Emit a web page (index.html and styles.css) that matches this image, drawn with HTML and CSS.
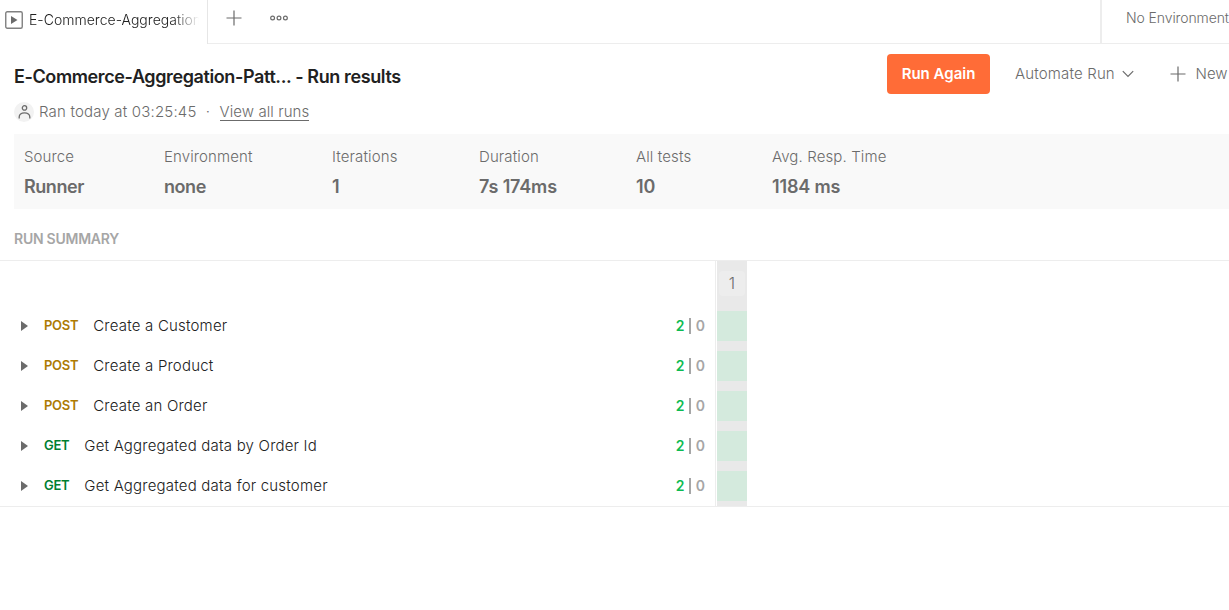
FILE: index.html
```
<!DOCTYPE html>
<html lang="en">
<head>
<meta charset="utf-8">
<title>Run results</title>
<link rel="stylesheet" href="styles.css">
</head>
<body>
<nav class="tabbar">
  <div class="tab">
    <svg class="tab-icon" width="18" height="18" viewBox="0 0 18 18"><rect x=".75" y=".75" width="16.5" height="16.5" rx="1.5" fill="none" stroke="#808080" stroke-width="1.4"/><path d="M6 5l6.5 4L6 13z" fill="#6b6b6b"/></svg>
    <span class="tab-name">E-Commerce-Aggregation</span>
  </div>
  <div class="tab-actions">
    <svg class="plus" width="16" height="16" viewBox="0 0 16 16"><path d="M8 .5v15M.5 8h15" stroke="#6b6b6b" stroke-width="1.2"/></svg>
    <svg class="dots" width="18" height="6" viewBox="0 0 18 6" fill="none" stroke="#6b6b6b" stroke-width="1.2"><circle cx="2.6" cy="3" r="1.9"/><circle cx="9" cy="3" r="1.9"/><circle cx="15.4" cy="3" r="1.9"/></svg>
  </div>
  <div class="environment">No Environment</div>
</nav>
<header class="header">
  <div class="heading">
    <h1 class="title">E-Commerce-Aggregation-Patt... - Run results</h1>
    <div class="meta">
      <span class="avatar"><svg width="14" height="14" viewBox="0 0 14 14" fill="none" stroke="#6b6b6b" stroke-width="1.3"><circle cx="7.5" cy="2.9" r="2.2"/><path d="M2.2 13.5V12c0-2.6 2-4.2 5.3-4.2s5.3 1.6 5.3 4.2v1.5"/></svg></span>
      <span class="ran">Ran today at 03:25:45</span>
      <span class="separator">·</span>
      <a class="all-runs">View all runs</a>
    </div>
  </div>
  <div class="actions">
    <button class="run-again">Run Again</button>
    <span class="automate">Automate Run</span>
    <svg class="chevron" width="12" height="8" viewBox="0 0 12 8"><path d="M.8 1.2L6 6.4l5.2-5.2" fill="none" stroke="#6b6b6b" stroke-width="1.2"/></svg>
    <svg class="new-icon" width="16" height="16" viewBox="0 0 16 16"><path d="M8 .5v15M.5 8h15" stroke="#6b6b6b" stroke-width="1.2"/></svg>
    <span class="new">New</span>
  </div>
</header>
<section class="stats">
  <div><div class="label">Source</div><div class="value">Runner</div></div>
  <div><div class="label">Environment</div><div class="value">none</div></div>
  <div><div class="label">Iterations</div><div class="value">1</div></div>
  <div><div class="label">Duration</div><div class="value numeric">7s 174ms</div></div>
  <div><div class="label">All tests</div><div class="value numeric">10</div></div>
  <div><div class="label">Avg. Resp. Time</div><div class="value numeric">1184 ms</div></div>
</section>
<h2 class="summary-title">RUN SUMMARY</h2>
<section class="summary">
  <div class="requests">
    <div class="request"><svg class="caret" width="7" height="10" viewBox="0 0 7 10"><path d="M0 0l7 5-7 5z"/></svg><span class="method post">POST</span><span class="name">Create a Customer</span><span class="pass">2</span><i class="bar"></i><span class="fail">0</span></div>
    <div class="request"><svg class="caret" width="7" height="10" viewBox="0 0 7 10"><path d="M0 0l7 5-7 5z"/></svg><span class="method post">POST</span><span class="name">Create a Product</span><span class="pass">2</span><i class="bar"></i><span class="fail">0</span></div>
    <div class="request"><svg class="caret" width="7" height="10" viewBox="0 0 7 10"><path d="M0 0l7 5-7 5z"/></svg><span class="method post">POST</span><span class="name">Create an Order</span><span class="pass">2</span><i class="bar"></i><span class="fail">0</span></div>
    <div class="request"><svg class="caret" width="7" height="10" viewBox="0 0 7 10"><path d="M0 0l7 5-7 5z"/></svg><span class="method get">GET</span><span class="name">Get Aggregated data by Order Id</span><span class="pass">2</span><i class="bar"></i><span class="fail">0</span></div>
    <div class="request"><svg class="caret" width="7" height="10" viewBox="0 0 7 10"><path d="M0 0l7 5-7 5z"/></svg><span class="method get">GET</span><span class="name">Get Aggregated data for customer</span><span class="pass">2</span><i class="bar"></i><span class="fail">0</span></div>
  </div>
  <div class="iteration">
    <div class="iteration-head"><span class="iteration-number">1</span></div>
    <div class="cell"></div><div class="cell"></div><div class="cell"></div><div class="cell"></div><div class="cell"></div>
  </div>
</section>
</body>
</html>
```

FILE: styles.css
```
* { box-sizing: border-box; }
body { margin: 0; height: 610px; overflow: hidden; background: #fff; color: #212121; font: 350 15px/20px Inter, "Liberation Sans", sans-serif; letter-spacing: .12px; white-space: nowrap; }
svg { display: block; flex: none; }
.tabbar { display: flex; height: 44px; }
.tab { width: 208px; flex: none; display: flex; padding: 10px 0 0 5px; border-right: 1px solid #e6e6e6; }
.tab-icon { margin-top: 1px; }
.tab-name { width: 172px; margin-left: 6px; overflow: hidden; font-size: 14px; letter-spacing: .02px; -webkit-mask-image: linear-gradient(to right, #000 145px, transparent 170px); mask-image: linear-gradient(to right, #000 145px, transparent 170px); }
.tab-actions { width: 892px; flex: none; display: flex; padding: 10px 0 0 18px; border-bottom: 1px solid #ededed; }
.dots { margin: 5px 0 0 28px; }
.environment { flex: 1; padding: 8px 0 0 24px; border-left: 2px solid #ededed; border-bottom: 1px solid #ededed; color: #6b6b6b; font-size: 14px; letter-spacing: -.1px; }
.header { display: flex; justify-content: space-between; height: 90px; padding: 10px 0 0 14px; }
.heading { flex: none; }
.title { margin: 0; padding-top: 11px; font-size: 18px; line-height: 24px; font-weight: 600; letter-spacing: -.39px; }
.meta { display: flex; align-items: center; margin-top: 13px; color: #6b6b6b; }
.ran { letter-spacing: .18px; }
.avatar { width: 20px; height: 20px; margin-right: 5px; display: grid; place-items: center; background: #f2f2f2; border-radius: 50%; }
.separator { width: 23px; text-align: center; }
.all-runs { border-bottom: 1px solid #6b6b6b; line-height: 17px; letter-spacing: .08px; }
.actions { width: 342px; height: 40px; flex: none; display: flex; align-items: center; color: #6b6b6b; }
.run-again { width: 103px; height: 40px; padding: 0; border: 0; border-radius: 4px; background: #ff6c37; color: #fff; font: 600 15px/20px Inter, "Liberation Sans", sans-serif; }
.automate { width: 102px; margin-left: 25px; letter-spacing: .16px; }
.chevron { margin-left: 5px; }
.new-icon { margin-left: 36px; }
.new { margin-left: 9.5px; letter-spacing: 0; }
.stats { display: grid; grid-template-columns: 140px 168px 147px 157px 136px auto; height: 75px; margin-left: 14px; padding: 13px 10px 0; background: #f9f9f9; color: #6b6b6b; }
.value { margin-top: 8px; font-size: 18px; line-height: 24px; font-weight: 600; letter-spacing: -.45px; }
.numeric { letter-spacing: -.15px; }
.summary-title { height: 51px; margin: 0; padding: 20px 0 0 14px; color: #a6a6a6; font-size: 14px; line-height: 20px; font-weight: 600; letter-spacing: -.25px; }
.summary { display: flex; height: 247px; border: solid #ededed; border-width: 1px 0; }
.requests { width: 716px; padding-top: 45px; border-right: 1px solid #ededed; }
.request { display: flex; align-items: center; height: 40px; padding: 0 10px 0 21px; }
.caret { fill: #6b6b6b; margin-right: 16px; }
.method { margin: -2px 15px 0 0; font-size: 13px; font-weight: 600; letter-spacing: -.3px; }
.post { color: #ad7a03; }
.get { color: #007f31; }
.name { flex: 1; letter-spacing: .2px; }
.pass { color: #0cbb52; font-size: 14px; font-weight: 600; }
.bar { width: 2px; height: 16px; margin: 0 5px 0 4px; background: #a6a6a6; }
.fail { color: #a6a6a6; font-size: 14px; font-weight: 600; }
.iteration { width: 30px; margin-left: 1px; background: #e9e9e9; }
.iteration-head { height: 50px; padding: 10px 2px 0; }
.iteration-number { display: block; height: 25px; border-radius: 4px; background: #ededed; color: #6b6b6b; font-size: 16px; line-height: 25px; text-align: center; }
.cell { height: 30px; margin-bottom: 10px; background: #d4eadd; }
```
